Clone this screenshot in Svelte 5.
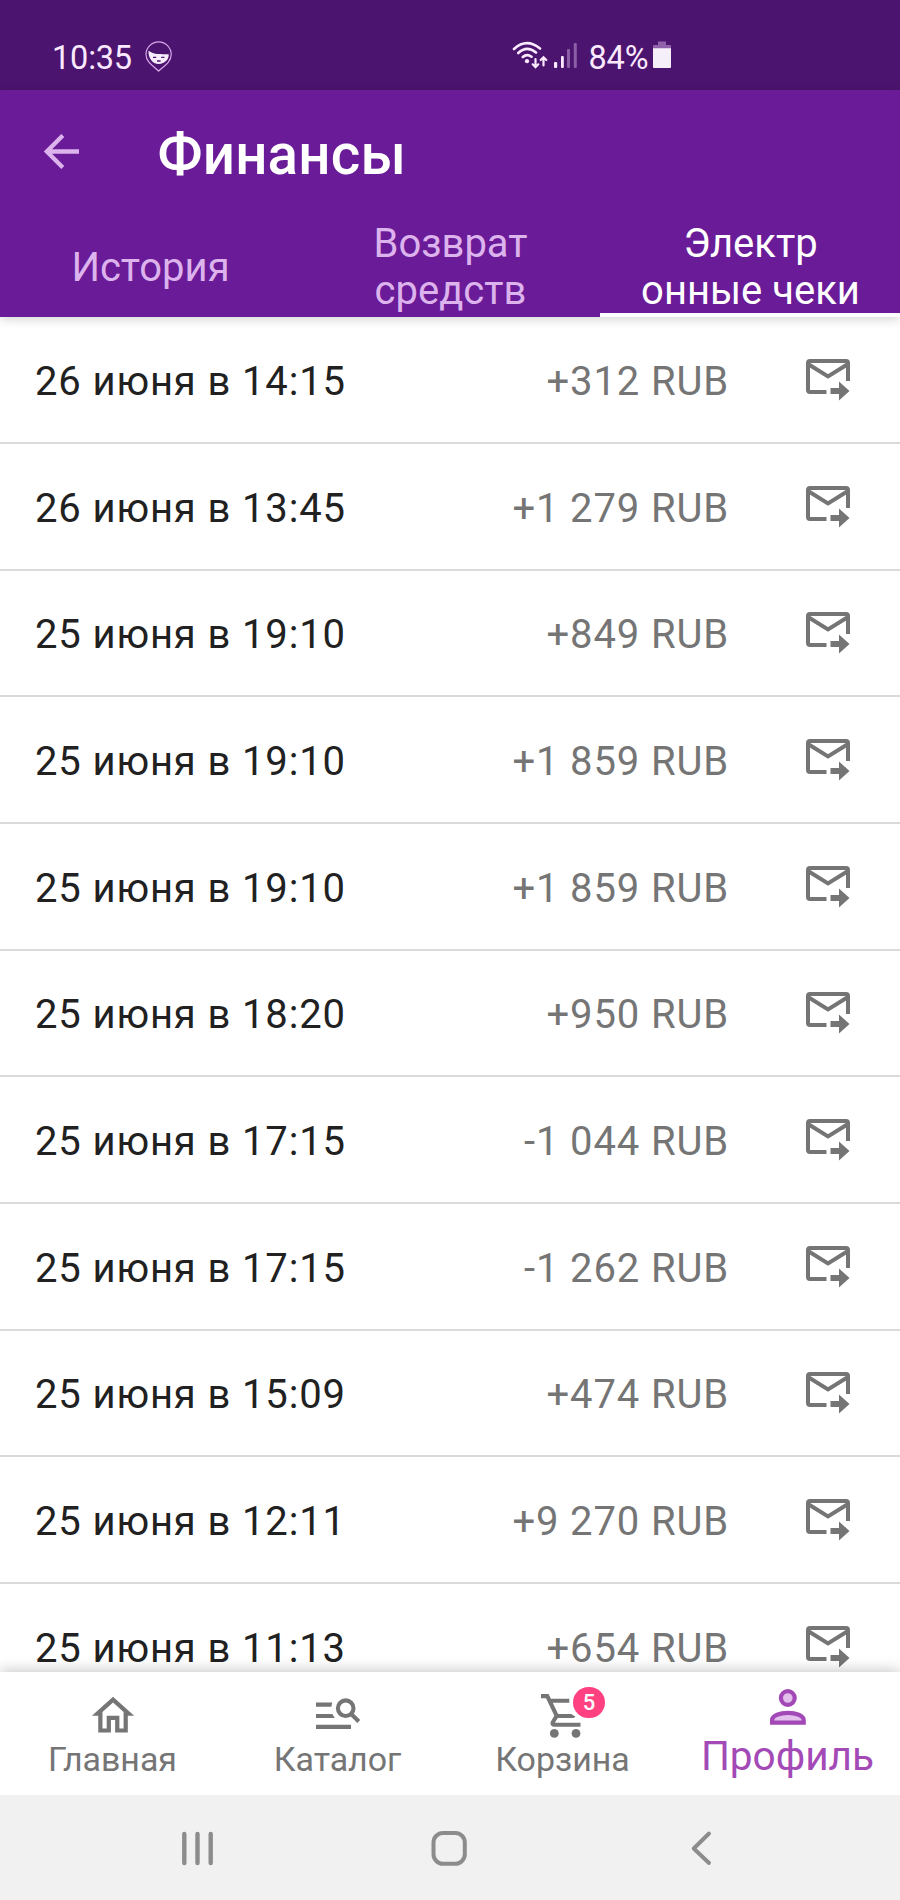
<script>
  const tabs = [
    { lines: ['История'], active: false },
    { lines: ['Возврат', 'средств'], active: false },
    { lines: ['Электр', 'онные чеки'], active: true }
  ];
  const receipts = [
    ['26 июня в 14:15', '+312 RUB'],
    ['26 июня в 13:45', '+1 279 RUB'],
    ['25 июня в 19:10', '+849 RUB'],
    ['25 июня в 19:10', '+1 859 RUB'],
    ['25 июня в 19:10', '+1 859 RUB'],
    ['25 июня в 18:20', '+950 RUB'],
    ['25 июня в 17:15', '-1 044 RUB'],
    ['25 июня в 17:15', '-1 262 RUB'],
    ['25 июня в 15:09', '+474 RUB'],
    ['25 июня в 12:11', '+9 270 RUB'],
    ['25 июня в 11:13', '+654 RUB']
  ];
</script>

<div class="screen">
  <div class="status">
    <span class="clock">10:35</span>
    <svg class="face" width="28" height="32" viewBox="0 0 28 32">
      <path d="M13.600 30C10 26 1 22 1 13.500A12.600 12.600 0 0 1 26.200 13.500C26.200 22 17.500 26 13.600 30Z" fill="none" stroke="#d8a9ea" stroke-width="1.200" />
      <path d="M3.500 9.800C9 14 16 13 23.700 13.300C24.200 18 20 23 13.700 23C7.500 23 3 17 3.500 9.800Z" fill="#f6ebfb" />
      <path d="M8 16.300h3.200M16.200 16.300h3.200M12 20h3.600" fill="none" stroke="#4b146f" stroke-width="1.300" />
    </svg>
    <svg class="wifi" width="36" height="28" viewBox="0 0 36 28" fill="none" stroke="#fbeaff" stroke-linecap="round">
      <path d="M2 8Q14.500-3.500 28 7.500M6.300 12Q14.700 4 24 11.500M10.800 16Q14.800 12.300 19.500 15.700" stroke-width="2.600" />
      <circle cx="15" cy="20.200" r="2.100" fill="#fbeaff" stroke="none" />
      <path d="M23.500 18v8M20.700 23.300l2.800 2.800l2.800-2.800M31.500 24.500v-8M28.700 19l2.800-2.800l2.800 2.800" stroke-width="2.200" />
    </svg>
    <svg class="signal" width="24" height="28" viewBox="0 0 24 28">
      <rect x="0" y="21" width="3.200" height="6" rx="1" fill="#fbeaff" />
      <rect x="7" y="15" width="2.800" height="12" rx="1" fill="#fbeaff" />
      <rect x="13" y="8" width="3" height="19" rx="1" fill="#8b5ea6" />
      <rect x="19.800" y="2" width="3" height="25" rx="1" fill="#8b5ea6" />
    </svg>
    <span class="percent">84%</span>
    <svg class="battery" width="18" height="28" viewBox="0 0 18 28">
      <path d="M5 0.500h8v3.500h4a1 1 0 0 1 1 1V8H0V5a1 1 0 0 1 1-1h4z" fill="#8f62ab" />
      <path d="M0 7.300h18V26a1 1 0 0 1-1 1H1a1 1 0 0 1-1-1z" fill="#f4eff8" />
    </svg>
  </div>

  <header>
    <div class="titlebar">
      <svg width="36" height="36" viewBox="0 0 36 36" fill="none" stroke="#dcb3ec" stroke-width="4.300">
        <path d="M18.800 1.500L2.800 17.500L18.800 33.500M3 17.500H35" />
      </svg>
      <h1>Финансы</h1>
    </div>
    <nav class="tabs">
      {#each tabs as tab}
        <div class="tab" class:active={tab.active}>
          {#each tab.lines as line}<span>{line}</span>{/each}
        </div>
      {/each}
    </nav>
  </header>

  <main>
    {#each receipts as [date, amount]}
      <div class="row">
        <span class="date">{date}</span>
        <span class="amount">{amount}</span>
        <svg width="46" height="44" viewBox="0 0 46 44" fill="none" stroke="#757575" stroke-width="4">
          <path d="M21.500 34H5a2 2 0 0 1-2-2V5a2 2 0 0 1 2-2H41a2 2 0 0 1 2 2V23" />
          <path d="M3 6L23 18.500L43 6" />
          <path d="M25.500 30H34V23.500L44.500 33L34 42.500V36H25.500Z" fill="#757575" stroke="none" />
        </svg>
      </div>
    {/each}
  </main>

  <nav class="bottom">
    <div class="item">
      <svg width="225" height="64" viewBox="0 1672.300 225 64">
        <path transform="translate(87.700 1690.700) scale(2.111)" fill="#757575" d="M12 5.690l5 4.500V18h-2v-6H9v6H7v-7.810l5-4.500M12 3L2 12h3v8h6v-6h2v6h6v-8h3L12 3z" />
      </svg>
      <span>Главная</span>
    </div>
    <div class="item">
      <svg width="225" height="64" viewBox="225 1672.300 225 64" fill="#757575">
        <path d="M316 1702.800h16.300l-1 4.200h-15.300zM316 1714.200h16.300l2.500 4.200h-18.800zM316 1725h35v4.300h-35z" />
        <g fill="none" stroke="#757575" stroke-width="4.100">
          <circle cx="345.700" cy="1708.500" r="7.800" />
          <path d="M351 1714L358.800 1721.800" />
        </g>
      </svg>
      <span>Каталог</span>
    </div>
    <div class="item">
      <svg class="cart" width="225" height="66" viewBox="450 1672.300 225 66">
        <path d="M541 1696.400H547.300L556.700 1716.200L552.800 1722.500Q551.500 1725 554.500 1725H580.500M549 1701H569.300" fill="none" stroke="#757575" stroke-width="4.100" />
        <path d="M556 1714.200H571.500Q573.500 1716 575.500 1716.800Q574.500 1718.400 572.500 1718.400H556Z" fill="#757575" />
        <circle cx="554.300" cy="1733.700" r="4.400" fill="#757575" />
        <circle cx="576" cy="1733.700" r="4.400" fill="#757575" />
      </svg>
      <b class="badge">5</b>
      <span>Корзина</span>
    </div>
    <div class="item active">
      <svg width="225" height="64" viewBox="675 1672.300 225 64" fill="#e3c0ec" stroke="#a348b7" stroke-width="4.200">
        <circle cx="787.800" cy="1698.300" r="6.900" />
        <path d="M772.100 1722.900V1720.500C772.100 1710.800 803.700 1710.800 803.700 1720.500V1722.900Z" />
      </svg>
      <span>Профиль</span>
    </div>
  </nav>

  <footer>
    <svg width="900" height="105" viewBox="0 1795 900 105" fill="none" stroke="#8c8c8c" stroke-width="4.400" stroke-linecap="round" stroke-linejoin="round">
      <path d="M184.300 1834v29M197.500 1834v29M210.700 1834v29" />
      <rect x="433.500" y="1833" width="31.300" height="30.800" rx="9.500" stroke-width="4" />
      <path d="M709 1833.500L693.700 1848.500L709 1863" stroke-width="3.900" />
    </svg>
  </footer>
</div>

<style>
  :global(body) { margin: 0; background: #fff; }
  .screen {
    width: 900px; height: 1900px; overflow: hidden;
    display: flex; flex-direction: column;
    font-family: Roboto, sans-serif; background: #fff;
  }
  svg { display: block; flex: none; }
  .status {
    flex: none; box-sizing: border-box; height: 90px; padding: 41px 0 0 52px;
    display: flex; align-items: flex-start;
    background: #4b146f; color: #fbeaff; font-size: 32.500px; line-height: 34px;
  }
  .status span { flex: none; white-space: nowrap; }
  .clock { width: 93px; letter-spacing: -0.200px; }
  .wifi { margin-left: 338.500px; }
  .signal { margin-left: 6px; }
  .percent { width: 61.500px; margin-left: 11px; letter-spacing: -0.200px; }
  .battery { margin-left: 2.500px; }
  header {
    flex: none; height: 227.330px; display: flex; flex-direction: column;
    background: #6a1b98; position: relative; z-index: 1;
    box-shadow: 0 2px 10px rgba(0, 0, 0, 0.180);
  }
  .titlebar { flex: none; height: 124px; box-sizing: border-box; padding: 0 44px; display: flex; align-items: center; }
  h1 {
    margin: 5px 0 0 77.500px; font-size: 56.500px; font-weight: 500; line-height: 66px; letter-spacing: 0.200px; color: #fff;
  }
  .tabs { flex: none; height: 103.330px; display: grid; grid-template-columns: repeat(3, 300px); grid-template-rows: 103.330px; }
  .tab {
    display: flex; flex-direction: column; align-items: center; justify-content: center;
    box-sizing: border-box; border-bottom: 4px solid transparent; padding: 7px 0 0 1px;
    font-size: 40px; line-height: 47px; color: #dcb3ec;
  }
  .tab.active { color: #fff; border-color: #fff; }
  main { flex: 1; min-height: 0; overflow: hidden; }
  .row {
    box-sizing: border-box; height: 126.670px; padding: 0 49px 0 35px;
    display: flex; align-items: center; border-bottom: 2px solid #dadada;
    font-size: 40px; line-height: 48px; letter-spacing: 0.860px; white-space: nowrap;
  }
  .row svg { margin-top: 1px; }
  .date { color: #212121; padding-top: 5px; }
  .amount { color: #757575; margin-left: auto; margin-right: 76px; padding-top: 5px; }
  .bottom {
    flex: none; height: 122.700px; display: grid; grid-template-columns: repeat(4, 225px);
    background: #fff; position: relative; z-index: 1; box-shadow: 0 -1px 14px rgba(0, 0, 0, 0.240);
  }
  .item {
    position: relative; display: flex; flex-direction: column; align-items: center;
    color: #757575; font-size: 33.900px; line-height: 48px;
  }
  .cart { margin-bottom: -2px; }
  .item.active { color: #a34ab7; font-size: 40.600px; line-height: 40px; }
  .badge {
    position: absolute; left: 123.300px; top: 14.700px; width: 31.400px; height: 31.400px; border-radius: 50%;
    background: #ff4081; color: #fff; font-size: 22px; font-weight: 500; line-height: 31.400px; text-align: center;
  }
  footer { flex: none; height: 105px; background: #f1f1f1; position: relative; z-index: 2; }
</style>
